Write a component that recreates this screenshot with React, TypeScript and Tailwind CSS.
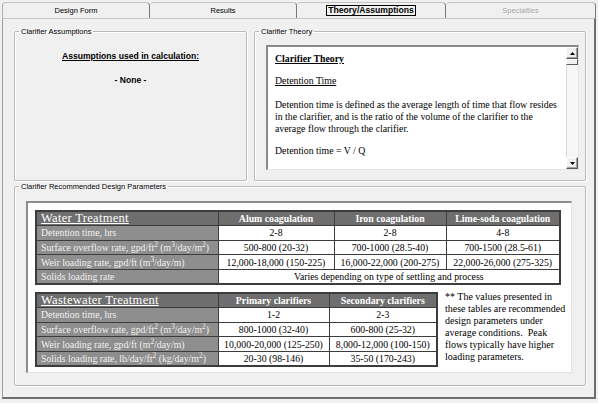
import React from "react";

const serif = "font-['Liberation_Serif','Times_New_Roman',serif]";

function Fieldset({
  title,
  className,
  children,
}: {
  title: string;
  className: string;
  children: React.ReactNode;
}) {
  return (
    <fieldset
      className={
        "m-0 p-0 min-w-0 border border-[#b9b9b9] rounded-[2px] shadow-[1px_1px_0_#ffffff,inset_1px_1px_0_#ffffff] " +
        className
      }
    >
      <legend className="ml-[4px] px-[2px] text-[7.5px] leading-[9px] text-black">{title}</legend>
      {children}
    </fieldset>
  );
}

function ScrollButton({ down }: { down?: boolean }) {
  return (
    <div className="h-[12px] w-[12px] shrink-0 bg-[#f0f0f0] border border-t-white border-l-white border-r-[#5a5a5a] border-b-[#5a5a5a] shadow-[inset_-1px_-1px_0_#a0a0a0] flex items-center justify-center">
      <svg width="5" height="3" viewBox="0 0 5 3">
        {down ? <path d="M0 0 L5 0 L2.5 3 Z" fill="#000" /> : <path d="M0 3 L5 3 L2.5 0 Z" fill="#000" />}
      </svg>
    </div>
  );
}

const labelCell =
  "border border-[#3c3c3c] bg-[#8e8e8e] text-[#f0f0f0] pl-[4px] text-left whitespace-nowrap h-[14.6px] p-0 leading-[13px]";
const headCell =
  "border border-[#3c3c3c] bg-[#6e6e6e] text-white font-bold text-center whitespace-nowrap h-[14.6px] p-0 leading-[13px]";
const valCell =
  "border border-[#3c3c3c] bg-white text-black text-center whitespace-nowrap h-[14.6px] p-0 leading-[13px]";
const titleCell =
  "border border-[#3c3c3c] bg-[#6e6e6e] text-white text-left whitespace-nowrap h-[14.6px] p-0 pl-[4px] leading-[13px] text-[12.5px] tracking-[0.3px] underline";

export default function App() {
  return (
    <div className="w-[598px] h-[403px] bg-[#f0f0f0] overflow-hidden pt-[2px] pl-[2px] pr-[2px] pb-[4px] flex flex-col font-['Liberation_Sans',Arial,sans-serif] text-black">
      {/* Tabs */}
      <div className="flex h-[16px] shrink-0 text-[7.5px]">
        <div className="w-[148px] flex items-center justify-center border-t border-l border-r border-t-[#c4c4c4] border-l-[#b0b0b0] border-r-[#7a7a7a] rounded-t-[4px]">
          Design Form
        </div>
        <div className="w-[147px] flex items-center justify-center border-t border-r border-t-[#c4c4c4] border-r-[#7a7a7a] rounded-t-[4px]">
          Results
        </div>
        <div className="w-[149px] flex items-center justify-center border-t border-r border-t-[#c4c4c4] border-r-[#7a7a7a] rounded-t-[4px]">
          <span className="font-bold text-[8.6px] leading-[9px] border border-black px-[1px]">Theory/Assumptions</span>
        </div>
        <div className="w-[150px] flex items-center justify-center border-t border-r border-t-[#c4c4c4] border-r-[#7a7a7a] rounded-t-[4px] text-[#a8a8a8]">
          Specialties
        </div>
      </div>

      {/* Panel */}
      <div className="flex-1 min-h-0 border-l border-t border-l-[#a0a0a0] border-t-[#c8c8c8] border-r-2 border-b-2 border-r-[#6e6e6e] border-b-[#6e6e6e] pt-[8px] pl-[11px] pr-[8px] flex flex-col">
        <div className="flex gap-[7px] h-[154px] shrink-0">
          <Fieldset title="Clarifier Assumptions" className="w-[233px] h-full">
            <div className="flex flex-col items-center">
              <div className="mt-[14px] text-[8.6px] font-bold underline leading-[12px]">
                Assumptions used in calculation:
              </div>
              <div className="mt-[12px] text-[8.6px] font-bold leading-[12px]">- None -</div>
            </div>
          </Fieldset>

          <Fieldset title="Clarifier Theory" className="flex-1 h-full">
            <div className="mt-[9px] ml-[11px] mr-[6px] h-[125px] flex bg-white border-t-2 border-l-2 border-t-[#8a8a8a] border-l-[#8a8a8a] border-b border-r border-b-[#e4e4e4] border-r-[#e4e4e4]">
              <div className={"flex-1 pl-[7px] pt-[6px] text-[9.8px] leading-[12px] whitespace-nowrap " + serif}>
                <div className="font-bold underline">Clarifier Theory</div>
                <div className="mt-[10px] underline">Detention Time</div>
                <div className="mt-[12px] leading-[11.8px]">
                  <div>Detention time is defined as the average length of time that flow resides</div>
                  <div>in the clarifier, and is the ratio of the volume of the clarifier to the</div>
                  <div>average flow through the clarifier.</div>
                </div>
                <div className="mt-[11px]">Detention time = V / Q</div>
              </div>
              <div className="w-[12px] flex flex-col shrink-0">
                <ScrollButton />
                <div className="h-[6px] shrink-0 bg-[#f0f0f0] border border-t-white border-l-white border-r-[#5a5a5a] border-b-[#5a5a5a]" />
                <div className="flex-1 bg-[#f6f6f6] border-l border-l-[#d8d8d8]" />
                <ScrollButton down />
              </div>
            </div>
          </Fieldset>
        </div>

        <Fieldset title="Clarifier Recommended Design Parameters" className="h-[204px] mt-[1px] shrink-0">
          <div className="mt-[10px] ml-[11px] mr-[13px] h-[172px] bg-white border-t-2 border-l-2 border-t-[#8c8c8c] border-l-[#8c8c8c] border-b border-r border-b-[#e4e4e4] border-r-[#e4e4e4] pl-[7px] pt-[7px]">
            <table className={"border-collapse table-fixed w-[524px] border-2 border-[#3c3c3c] text-[9.8px] " + serif}>
              <colgroup>
                <col className="w-[182px]" />
                <col className="w-[116px]" />
                <col className="w-[112px]" />
                <col className="w-[114px]" />
              </colgroup>
              <tbody>
                <tr>
                  <td className={titleCell}>Water Treatment</td>
                  <td className={headCell}>Alum coagulation</td>
                  <td className={headCell}>Iron coagulation</td>
                  <td className={headCell}>Lime-soda coagulation</td>
                </tr>
                <tr>
                  <td className={labelCell}>Detention time, hrs</td>
                  <td className={valCell}>2-8</td>
                  <td className={valCell}>2-8</td>
                  <td className={valCell}>4-8</td>
                </tr>
                <tr>
                  <td className={labelCell}>
                    Surface overflow rate, gpd/ft<sup>2</sup> (m<sup>3</sup>/day/m<sup>2</sup>)
                  </td>
                  <td className={valCell}>500-800 (20-32)</td>
                  <td className={valCell}>700-1000 (28.5-40)</td>
                  <td className={valCell}>700-1500 (28.5-61)</td>
                </tr>
                <tr>
                  <td className={labelCell}>
                    Weir loading rate, gpd/ft (m<sup>3</sup>/day/m)
                  </td>
                  <td className={valCell}>12,000-18,000 (150-225)</td>
                  <td className={valCell}>16,000-22,000 (200-275)</td>
                  <td className={valCell}>22,000-26,000 (275-325)</td>
                </tr>
                <tr>
                  <td className={labelCell}>Solids loading rate</td>
                  <td className={valCell} colSpan={3}>
                    Varies depending on type of settling and process
                  </td>
                </tr>
              </tbody>
            </table>

            <div className="mt-[7px] flex gap-[7px] items-start">
              <table className={"border-collapse table-fixed w-[401px] border-2 border-[#3c3c3c] text-[9.8px] shrink-0 " + serif}>
                <colgroup>
                  <col className="w-[182px]" />
                  <col className="w-[111px]" />
                  <col className="w-[108px]" />
                </colgroup>
                <tbody>
                  <tr>
                    <td className={titleCell}>Wastewater Treatment</td>
                    <td className={headCell}>Primary clarifiers</td>
                    <td className={headCell}>Secondary clarifiers</td>
                  </tr>
                  <tr>
                    <td className={labelCell}>Detention time, hrs</td>
                    <td className={valCell}>1-2</td>
                    <td className={valCell}>2-3</td>
                  </tr>
                  <tr>
                    <td className={labelCell}>
                      Surface overflow rate, gpd/ft<sup>2</sup> (m<sup>3</sup>/day/m<sup>2</sup>)
                    </td>
                    <td className={valCell}>800-1000 (32-40)</td>
                    <td className={valCell}>600-800 (25-32)</td>
                  </tr>
                  <tr>
                    <td className={labelCell}>
                      Weir loading rate, gpd/ft (m<sup>2</sup>/day/m)
                    </td>
                    <td className={valCell}>10,000-20,000 (125-250)</td>
                    <td className={valCell}>8,000-12,000 (100-150)</td>
                  </tr>
                  <tr>
                    <td className={labelCell}>
                      Solids loading rate, lb/day/ft<sup>2</sup> (kg/day/m<sup>2</sup>)
                    </td>
                    <td className={valCell}>20-30 (98-146)</td>
                    <td className={valCell}>35-50 (170-243)</td>
                  </tr>
                </tbody>
              </table>
              <div className={"text-[10px] leading-[12px] whitespace-nowrap -mt-[1px] " + serif}>
                <div>** The values presented in</div>
                <div>these tables are recommended</div>
                <div>design parameters under</div>
                <div>average conditions.&nbsp; Peak</div>
                <div>flows typically have higher</div>
                <div>loading parameters.</div>
              </div>
            </div>
          </div>
        </Fieldset>
      </div>
    </div>
  );
}
